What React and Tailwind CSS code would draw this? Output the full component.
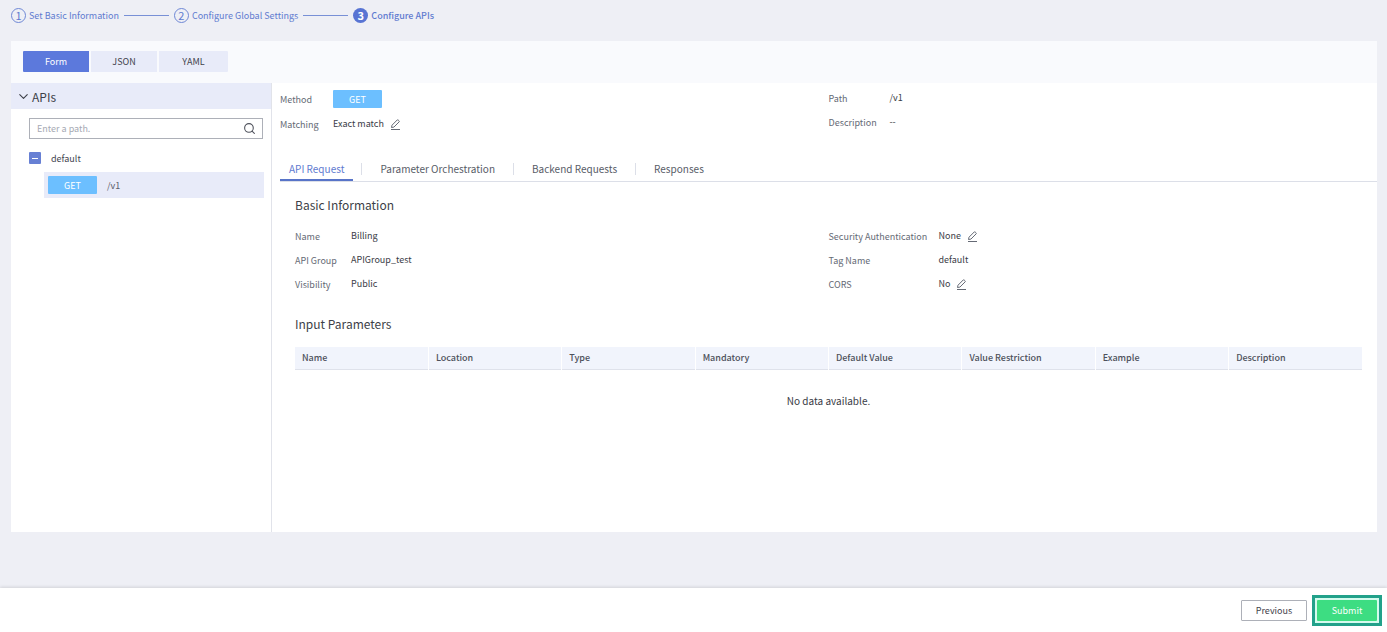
import React from "react";
import { ChevronDown, Search } from "lucide-react";

const STEPS = ["Set Basic Information", "Configure Global Settings", "Configure APIs"];
const TABS = ["API Request", "Parameter Orchestration", "Backend Requests", "Responses"];
const COLUMNS = [
  "Name",
  "Location",
  "Type",
  "Mandatory",
  "Default Value",
  "Value Restriction",
  "Example",
  "Description"
];

function Steps() {
  const current = STEPS.length - 1;
  return (
    <ol className="flex items-center gap-[5px] px-[11px] pt-2 text-[#5f7bd0]">
      {STEPS.map((step, i) => (
        <React.Fragment key={step}>
          {i > 0 && <li aria-hidden="true" className="h-px w-[45px] bg-[#7890d6]" />}
          <li className="flex items-center gap-[3px]">
            <span
              className={
                i === current
                  ? "flex size-[15px] items-center justify-center rounded-full bg-[#5874d3] text-[11px] leading-none font-bold text-white"
                  : "flex size-[15px] items-center justify-center rounded-full border border-[#6f88d6] text-[11px] leading-none"
              }
            >
              {i + 1}
            </span>
            <span className={i === current ? "font-medium" : ""}>{step}</span>
          </li>
        </React.Fragment>
      ))}
    </ol>
  );
}

function MethodBadge() {
  return (
    <span className="inline-flex h-[18px] w-[49px] items-center justify-center rounded-[1px] bg-[#6cbfff] text-white">
      GET
    </span>
  );
}

function EditButton({ label }) {
  return (
    <button type="button" aria-label={label} className="mt-0.5 text-[#656a75]">
      <svg width="11" height="11" viewBox="0 0 11 11" fill="none" stroke="currentColor">
        <path d="M1.5 8.5 2 6.2 7.2 1q.5-.5 1 0l.9.9q.5.5 0 1L3.9 8.1 1.5 8.5ZM1 10.5h9" />
      </svg>
    </button>
  );
}

function Field({ label, width, children }) {
  return (
    <div className="flex h-6 items-center">
      <dt className={`${width} text-[#656a75]`}>{label}</dt>
      <dd className="flex items-center gap-1.5 pb-0.5 text-[#3a3c46]">{children}</dd>
    </div>
  );
}

function Sidebar() {
  return (
    <aside className="w-[261px] shrink-0 border-r border-[#e1e3ea]">
      <h2 className="flex h-[26px] items-center gap-px bg-[#e8ebf9] pl-[5px] text-[12px] text-[#3d3f48]">
        <ChevronDown size={15} strokeWidth={1.75} />
        APIs
      </h2>
      <div className="pt-[9px] pr-[7px] pl-[18px]">
        <div className="mr-px flex h-[21px] items-center border border-[#adb0b8] pr-1.5 pl-[7px]">
          <input
            type="text"
            aria-label="Path"
            placeholder="Enter a path."
            className="min-w-0 flex-1 outline-none placeholder:text-[#a6a9b3]"
          />
          <button type="button" aria-label="Search" className="text-[#4f525c]">
            <Search size={13} />
          </button>
        </div>
        <div className="mt-[7px] flex h-6 items-center gap-2.5 text-[#43454f]">
          <button
            type="button"
            aria-label="Collapse default"
            className="flex size-3 items-center justify-center rounded-[1px] bg-[#6780d4]"
          >
            <span className="h-px w-1.5 bg-white" />
          </button>
          default
        </div>
        <a
          href="#v1"
          className="mt-0.5 ml-[15px] flex h-[26px] items-center gap-2.5 bg-[#e8ebf9] pl-1 text-[#5c606b]"
        >
          <MethodBadge />
          /v1
        </a>
      </div>
    </aside>
  );
}

function FormatSwitch() {
  return (
    <div className="flex h-[42px] items-start gap-0.5 bg-[#f9fafd] px-3 pt-2.5 text-[#3f424c]">
      <button type="button" className="h-[21px] w-[66px] rounded-l-[1px] bg-[#5c79dc] text-white">
        Form
      </button>
      <button type="button" className="h-[21px] w-[66px] bg-[#e8ebf9]">
        JSON
      </button>
      <button type="button" className="h-[21px] w-[69px] rounded-r-[1px] bg-[#e8ebf9]">
        YAML
      </button>
    </div>
  );
}

function RequestDetails() {
  return (
    <section className="pt-[13px] pr-[15px] pb-5 pl-[23px]">
      <h3 className="text-[12px] leading-[20px] text-[#3d3f48]">Basic Information</h3>
      <div className="mt-[9px] grid grid-cols-2">
        <dl>
          <Field label="Name" width="w-[56px]">Billing</Field>
          <Field label="API Group" width="w-[56px]">APIGroup_test</Field>
          <Field label="Visibility" width="w-[56px]">Public</Field>
        </dl>
        <dl>
          <Field label="Security Authentication" width="w-[110px]">
            None
            <EditButton label="Edit security authentication" />
          </Field>
          <Field label="Tag Name" width="w-[110px]">default</Field>
          <Field label="CORS" width="w-[110px]">
            No
            <EditButton label="Edit CORS" />
          </Field>
        </dl>
      </div>
      <h3 className="mt-[18px] text-[12px] leading-[20px] text-[#3d3f48]">Input Parameters</h3>
      <table className="mt-[13px] w-full table-fixed text-left">
        <thead>
          <tr className="h-[22px] border-b border-[#dfe2eb] bg-[#f1f4fc] text-[#4d515b]">
            {COLUMNS.map((column) => (
              <th
                key={column}
                scope="col"
                className="border-r border-white py-0 pl-[7px] font-medium last:border-r-0"
              >
                {column}
              </th>
            ))}
          </tr>
        </thead>
        <tbody>
          <tr>
            <td colSpan={COLUMNS.length} className="h-[62px] text-center text-[10px] text-[#3a3c46]">
              No data available.
            </td>
          </tr>
        </tbody>
      </table>
    </section>
  );
}

function ApiDetail() {
  return (
    <main className="min-w-0 flex-1">
      <div className="grid grid-cols-2 pt-[3px] pl-2">
        <dl>
          <div className="flex h-[26px] items-center">
            <dt className="w-[53px] text-[#656a75]">Method</dt>
            <dd className="flex">
              <MethodBadge />
            </dd>
          </div>
          <Field label="Matching" width="w-[53px]">
            Exact match
            <EditButton label="Edit matching" />
          </Field>
        </dl>
        <dl>
          <Field label="Path" width="w-[61px]">/v1</Field>
          <Field label="Description" width="w-[61px]">--</Field>
        </dl>
      </div>
      <div
        role="tablist"
        className="mt-[21px] ml-2 flex h-[25px] items-center border-b border-[#dcdfe8] text-[10px] text-[#585c67]"
      >
        {TABS.map((tab, i) => (
          <React.Fragment key={tab}>
            {i > 0 && <span className="mx-2 h-3 w-px bg-[#dcdfe8]" />}
            <button
              type="button"
              role="tab"
              aria-selected={i === 0}
              className={
                i === 0
                  ? "h-[24px] border-b-2 border-[#5874c8] px-[9px] text-[#5f7bd0]"
                  : "h-[24px] border-b-2 border-transparent px-2.5"
              }
            >
              {tab}
            </button>
          </React.Fragment>
        ))}
      </div>
      <RequestDetails />
    </main>
  );
}

export default function App() {
  return (
    <div className="flex min-h-screen flex-col bg-[#eeeff5] font-['Noto_Sans_CJK_SC','Noto_Sans',sans-serif] text-[9px] leading-[15px]">
      <Steps />
      <div className="mt-[18px] mr-[10px] mb-14 ml-[11px] flex flex-1 flex-col bg-white">
        <FormatSwitch />
        <div className="flex flex-1">
          <Sidebar />
          <ApiDetail />
        </div>
      </div>
      <footer className="flex h-[44px] items-center justify-end gap-[5px] bg-white pr-[5px] shadow-[0_-1px_3px_rgba(0,0,0,0.12)]">
        <button
          type="button"
          className="h-[21px] w-[66px] rounded-[1px] border border-[#adb0b8] text-[#3f424c]"
        >
          Previous
        </button>
        <div className="border-3 border-[#22a18a] bg-[#d5fbee] p-0.5">
          <button type="button" className="block h-[21px] w-[60px] rounded-[1px] bg-[#3ddd82] text-white">
            Submit
          </button>
        </div>
      </footer>
    </div>
  );
}
